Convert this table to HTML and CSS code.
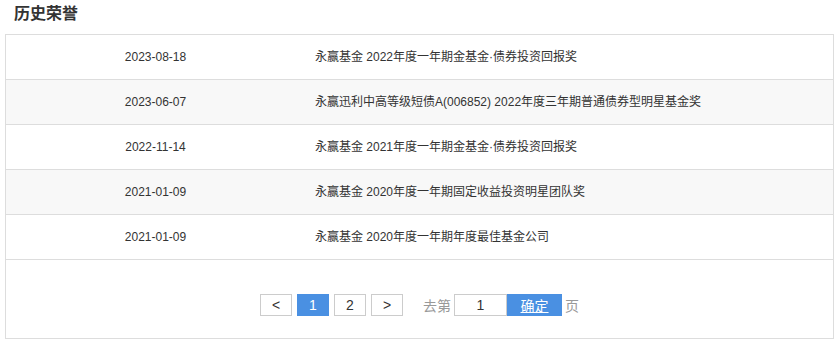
FILE: index.html
```html
<!DOCTYPE html>
<html lang="zh-CN">
<head>
<meta charset="utf-8">
<link rel="stylesheet" href="styles.css">
</head>
<body>
<h2 class="title">历史荣誉</h2>
<div class="panel">
  <div class="honors">
    <div class="row"><div class="date">2023-08-18</div><div class="name">永赢基金 2022年度一年期金基金·债券投资回报奖</div></div>
    <div class="row"><div class="date">2023-06-07</div><div class="name">永赢迅利中高等级短债A(006852) 2022年度三年期普通债券型明星基金奖</div></div>
    <div class="row"><div class="date">2022-11-14</div><div class="name">永赢基金 2021年度一年期金基金·债券投资回报奖</div></div>
    <div class="row"><div class="date">2021-01-09</div><div class="name">永赢基金 2020年度一年期固定收益投资明星团队奖</div></div>
    <div class="row"><div class="date">2021-01-09</div><div class="name">永赢基金 2020年度一年期年度最佳基金公司</div></div>
  </div>
  <div class="pager">
    <span class="pbtn">&lt;</span>
    <span class="pbtn active">1</span>
    <span class="pbtn">2</span>
    <span class="pbtn">&gt;</span>
    <span class="goto">去第</span>
    <span class="pinput">1</span>
    <span class="ok">确定</span>
    <span class="page">页</span>
  </div>
</div>
</body>
</html>
```
FILE: styles.css
```css
* { box-sizing: border-box; }
body {
  margin: 0;
  padding: 0 6px 0 5px;
  font-family: "Liberation Sans", "Noto Sans CJK SC", sans-serif;
  font-size: 12px;
  color: #333;
  background: #fff;
}
.title {
  margin: 0;
  padding: 4px 0 0 9px;
  height: 34px;
  font-size: 16px;
  font-weight: 600;
  line-height: 20px;
  color: #333;
}
.panel {
  border: 1px solid #ddd;
  height: 305px;
}
.row {
  display: grid;
  grid-template-columns: 299px 1fr;
  align-items: center;
  height: 45px;
  border-bottom: 1px solid #ddd;
  line-height: 16px;
}
.row:nth-child(even) { background: #f8f8f8; }
.date { text-align: center; }
.name { padding-left: 10px; }
.pager {
  display: flex;
  align-items: center;
  padding: 34px 0 0 254px;
}
.pbtn {
  width: 32px;
  height: 22px;
  border: 1px solid #ccc;
  display: flex;
  align-items: center;
  justify-content: center;
  margin-right: 5px;
  font-size: 14px;
  color: #333;
}
.pbtn.active {
  background: #4a90e2;
  border-color: #4a90e2;
  color: #fff;
}
.goto {
  margin-left: 15px;
  color: #999;
  font-size: 14px;
  margin-right: 3px;
}
.pinput {
  width: 53px;
  height: 22px;
  border: 1px solid #ccc;
  display: flex;
  align-items: center;
  justify-content: center;
  font-size: 14px;
}
.ok {
  width: 55px;
  height: 22px;
  background: #4a90e2;
  color: #fff;
  display: flex;
  align-items: center;
  justify-content: center;
  font-size: 14px;
  text-decoration: underline;
}
.page {
  margin-left: 3px;
  color: #999;
  font-size: 14px;
}
```
